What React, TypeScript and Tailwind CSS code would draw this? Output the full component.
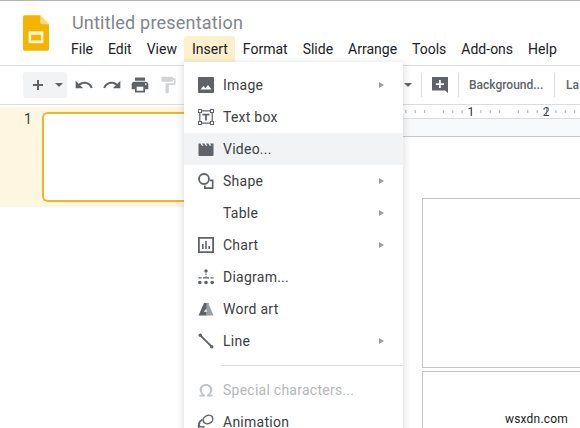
import React from "react";

const I = ({ children, cls = "w-[18px] h-[18px]" }: { children: React.ReactNode; cls?: string }) => (
  <svg viewBox="0 0 18 18" className={cls} fill="#5f6368">{children}</svg>
);

const icons: Record<string, React.ReactNode> = {
  image: <I><path d="M2 1h14a1 1 0 0 1 1 1v14a1 1 0 0 1-1 1H2a1 1 0 0 1-1-1V2a1 1 0 0 1 1-1zm1.500 12.500h11L11 9l-2.700 3.200L6.500 10z" fillRule="evenodd" /></I>,
  text: <I><path d="M1 1h4v1.200h8V1h4v4h-1.200v8H17v4h-4v-1.200H5V17H1v-4h1.200V5H1zm1 1v2h2V2zm12 0v2h2V2zM2 14v2h2v-2zm12 0v2h2v-2zM3.400 5v8H5v1.600h8V13h1.600V5H13V3.400H5V5zM5.500 5.800h7v1.800H9.900v5H8.100v-5H5.500z" fillRule="evenodd" /></I>,
  video: <I><path d="M1.500 3.500l2 0 1.400 2.200h1.600L5 3.500h2.400l1.400 2.200h1.600L9 3.500h2.400l1.400 2.200h1.600L13 3.500h3.500v11.500a1 1 0 0 1-1 1h-13a1 1 0 0 1-1-1z" /></I>,
  shape: <I><circle cx="7" cy="7" r="5" fill="none" stroke="#5f6368" strokeWidth="1.800" /><path d="M13 7.500h3.500v9.500H7v-3.500h1.700v1.800h6.100V9.200H13z" /></I>,
  chart: <I><path d="M1 1h16v16H1zm1.800 1.800v12.400h12.400V2.800zM5 8h1.600v5H5zm3.200-3h1.600v8H8.200zm3.200 5H13v3h-1.600z" fillRule="evenodd" /></I>,
  diagram: <I><circle cx="9" cy="3" r="1.700" /><path d="M8.400 5.500h1.200v1.500H8.400zM8.400 8.200h1.200v1.500H8.400z" /><path d="M1.500 9.200h3v1.200h-3zM6 9.200h6v1.200H6zM13.500 9.200h3v1.200h-3z" /><circle cx="2.800" cy="14.500" r="1.800" /><circle cx="9" cy="14.500" r="1.800" /><circle cx="15.200" cy="14.500" r="1.800" /></I>,
  word: <I><path d="M7 3h4.500l-1.500 12.500H1.500z" fill="#5f6368" /><path d="M9.500 3h1.700L16.500 15.500H9z" fill="#9aa0a6" /><path d="M8 9.500h1.800l.2 2.500H7z" fill="#dadce0" /></I>,
  line: <I><path d="M3.800 2.400l11.800 11.800-1.400 1.400L2.400 3.800z" /><circle cx="3.300" cy="3.300" r="1.700" /><circle cx="14.700" cy="14.700" r="1.700" /></I>,
  omega: <I><path d="M9 3c-3.600 0-6.300 2.500-6.300 5.800 0 2.100 1.100 3.800 2.800 4.900H2.500V15.500H8v-1.800c-2-.6-3.300-2.500-3.300-4.800C4.700 6.600 6.500 4.800 9 4.800s4.300 1.800 4.300 4.100c0 2.300-1.300 4.200-3.300 4.800v1.800h5.500v-1.800h-3c1.700-1.100 2.800-2.800 2.800-4.900C15.300 5.500 12.600 3 9 3z" fill="#bdc1c6" /></I>,
  anim: <I><g fill="none" stroke="#5f6368" strokeWidth="1.500"><ellipse cx="11" cy="6.500" rx="5" ry="4" transform="rotate(-25 11 6.500)" /><path d="M5.500 6.500c-2.500 1.500-4 3.500-3.500 5.500s3 2.500 5.500 1.500" /><path d="M3 10c-1.500 1.500-1.800 3.500-1 5s3 1.500 5 .5" /></g></I>,
};

type Row = { icon?: string; label: string; sub?: boolean; hover?: boolean; muted?: boolean };
const rows: Row[] = [
  { icon: "image", label: "Image", sub: true },
  { icon: "text", label: "Text box" },
  { icon: "video", label: "Video...", hover: true },
  { icon: "shape", label: "Shape", sub: true },
  { label: "Table", sub: true },
  { icon: "chart", label: "Chart", sub: true },
  { icon: "diagram", label: "Diagram..." },
  { icon: "word", label: "Word art" },
  { icon: "line", label: "Line", sub: true },
];

const MenuRow = ({ icon, label, sub, hover, muted }: Row) => (
  <div className={`flex h-[32px] items-center pl-[12px] pr-[19px] ${hover ? "bg-[#f1f3f4]" : ""}`}>
    <div className="flex w-[20px] justify-center">{icon && icons[icon]}</div>
    <span className={`ml-[7px] flex-1 text-[14px] tracking-[0.25px] ${muted ? "text-[#b4b7ba]" : "text-[#3c4043]"}`}>{label}</span>
    {sub && <span className="h-0 w-0 border-y-[3.500px] border-l-[5px] border-y-transparent border-l-[#9aa0a6]" />}
  </div>
);

const Sep = ({ cls }: { cls: string }) => <div className={`h-[24px] w-px shrink-0 bg-[#dadce0] ${cls}`} />;

const ticks = Array.from({ length: 42 }, (_, i) => i);

export default function App() {
  const menus = ["File", "Edit", "View", "Insert", "Format", "Slide", "Arrange", "Tools", "Add-ons", "Help"];
  return (
    <div className="relative flex h-[428px] w-[580px] flex-col overflow-hidden bg-white font-['Roboto',sans-serif]">
      <header className="flex h-[66px] shrink-0 border-y border-t-[#b5b5b5] border-b-[#dadce0]">
        <div className="w-[64px] shrink-0 pl-[23px] pt-[14px]">
          <svg viewBox="0 0 28 38" className="h-[36px] w-[26px]">
            <path d="M2 0h16.500L28 9.500V36a2 2 0 0 1-2 2H2a2 2 0 0 1-2-2V2a2 2 0 0 1 2-2z" fill="#f4b400" />
            <path d="M18.500 0L28 9.500h-7.500a2 2 0 0 1-2-2z" fill="#fadb80" />
            <path d="M7 17h14a1 1 0 0 1 1 1v11a1 1 0 0 1-1 1H7a1 1 0 0 1-1-1V18a1 1 0 0 1 1-1zm1.800 3.800v6.400h10.400v-6.400z" fill="#fff3d0" fillRule="evenodd" />
          </svg>
        </div>
        <div className="flex min-w-0 flex-col">
          <div className="ml-[8px] mt-[9px] h-[26px] text-[18px] leading-[26px] tracking-[0.2px] text-[#80868b]">Untitled presentation</div>
          <nav className="ml-[-0.5px] flex h-[26px] items-center text-[14px]">
            {menus.map((m) => (
              <span key={m} className={`flex h-[26px] items-center rounded-t-[3px] px-[7.500px] text-[#202124] ${m === "Insert" ? "bg-[#fdf0cd]" : ""}`}>{m}</span>
            ))}
          </nav>
        </div>
      </header>

      <div className="flex h-[39px] shrink-0 items-center border-b border-[#dadce0] pl-[23px] text-[#5f6368]">
        <div className="flex h-[26px] w-[44px] shrink-0 items-center rounded-[3px] bg-[#f1f3f4] pl-[9px]">
          <svg viewBox="0 0 12 12" className="h-[12px] w-[12px]"><path d="M5 1h2v4h4v2H7v4H5V7H1V5h4z" fill="#5f6368" /></svg>
          <span className="ml-[11px] h-0 w-0 border-x-[4px] border-t-[4px] border-x-transparent border-t-[#5f6368]" />
        </div>
        <svg viewBox="0 0 24 24" className="ml-[7px] h-[20px] w-[20px] shrink-0" fill="#5f6368"><path d="M12.500 8c-2.650 0-5.050.99-6.900 2.600L2 7v9h9l-3.620-3.620c1.390-1.160 3.160-1.880 5.120-1.880 3.540 0 6.550 2.310 7.600 5.500l2.370-.78C21.080 11.030 17.150 8 12.500 8z" /></svg>
        <svg viewBox="0 0 24 24" className="ml-[8px] h-[20px] w-[20px] shrink-0" fill="#5f6368"><path d="M18.400 10.600C16.550 8.990 14.150 8 11.500 8c-4.650 0-8.580 3.030-9.960 7.220L3.900 16c1.050-3.190 4.050-5.500 7.600-5.500 1.950 0 3.730.72 5.120 1.880L13 16h9V7l-3.600 3.600z" /></svg>
        <svg viewBox="0 0 24 24" className="ml-[8px] h-[20px] w-[20px] shrink-0" fill="#5f6368"><path d="M19 8H5c-1.660 0-3 1.340-3 3v6h4v4h12v-4h4v-6c0-1.660-1.340-3-3-3zm-3 11H8v-5h8v5zm3-7c-.55 0-1-.45-1-1s.45-1 1-1 1 .45 1 1-.45 1-1 1zm-1-9H6v4h12V3z" /></svg>
        <svg viewBox="0 0 24 24" className="ml-[8px] h-[20px] w-[20px] shrink-0" fill="#d1d3d6"><path d="M18 4V3c0-.55-.45-1-1-1H5c-.55 0-1 .45-1 1v4c0 .55.45 1 1 1h12c.55 0 1-.45 1-1V6h1v4H9v11c0 .55.45 1 1 1h2c.55 0 1-.45 1-1v-9h8V4h-3z" /></svg>
        <div className="ml-auto flex items-center">
          <span className="h-0 w-0 border-x-[4px] border-t-[4px] border-x-transparent border-t-[#5f6368]" />
          <Sep cls="ml-[9px]" />
          <svg viewBox="0 0 18 18" className="ml-[9px] h-[18px] w-[18px] shrink-0"><path d="M1 1h16v16l-3-2.500H1zm7 3v3.200H4.800v1.700H8V12h1.800V8.900H13V7.200H9.800V4z" fill="#5f6368" fillRule="evenodd" /></svg>
          <Sep cls="ml-[9px]" />
          <span className="ml-[10px] w-[75px] whitespace-nowrap text-[12px] font-medium">Background...</span>
          <Sep cls="ml-[10px]" />
          <span className="ml-[11px] w-[14px] text-[12px] font-medium">La</span>
        </div>
      </div>

      <div className="flex min-h-0 flex-1">
        <aside className="h-full w-[184px] shrink-0 bg-white">
          <div className="mt-[2px] flex h-[100px] bg-[#fef6e0] pl-[24px] pt-[5px]">
            <span className="w-[18px] text-[14px] leading-[14px] text-[#3c4043]">1</span>
            <div className="h-[90px] flex-1 rounded-l-[6px] border-2 border-r-0 border-[#f0b429] bg-white" />
          </div>
        </aside>
        <main className="flex min-w-0 flex-1 flex-col bg-white">
          <div className="relative flex h-[14px] shrink-0 items-center border-b border-[#dadce0] bg-white pl-[283.500px] text-[12px] leading-none text-[#3c4043]">
            <svg className="absolute left-0 top-0 h-[13px] w-[396px]" viewBox="0 0 396 13">
              {ticks.map((i) => {
                const x = 212.500 + i * 9.375;
                const big = i % 8 === 0;
                const num = i % 8 === 4;
                return num ? null : <line key={i} x1={x} x2={x} y1={big ? 3 : 5} y2={big ? 10 : 8} stroke="#a8acb0" strokeWidth="1" />;
              })}
            </svg>
            <span className="relative">1</span>
            <span className="relative ml-[68.500px]">2</span>
          </div>
          <div className="h-[18px] shrink-0 border-b border-[#c8c9ca] bg-[#f8f9fa]" />
          <div className="ml-[238px] mt-[61px] flex w-[200px] flex-col gap-[3px]">
            <div className="h-[170px] border border-[#c4c5c6] bg-white" />
            <div className="h-[60px] border border-[#c4c5c6] bg-white" />
          </div>
        </main>
      </div>

      <div className="absolute left-[184px] top-[62px] h-[380px] w-[219px] rounded-b-[3px] bg-white py-[7px] shadow-[0_2px_6px_2px_rgba(60,64,67,0.15)]">
        {rows.map((r) => <MenuRow key={r.label} {...r} />)}
        <div className="my-[8px] ml-[37px] h-px bg-[#dadce0]" />
        <MenuRow icon="omega" label="Special characters..." muted />
        <MenuRow icon="anim" label="Animation" />
      </div>

      <span className="absolute bottom-0 right-[12px] text-[12px] tracking-[0.2px] text-[#222]">wsxdn.com</span>
    </div>
  );
}
